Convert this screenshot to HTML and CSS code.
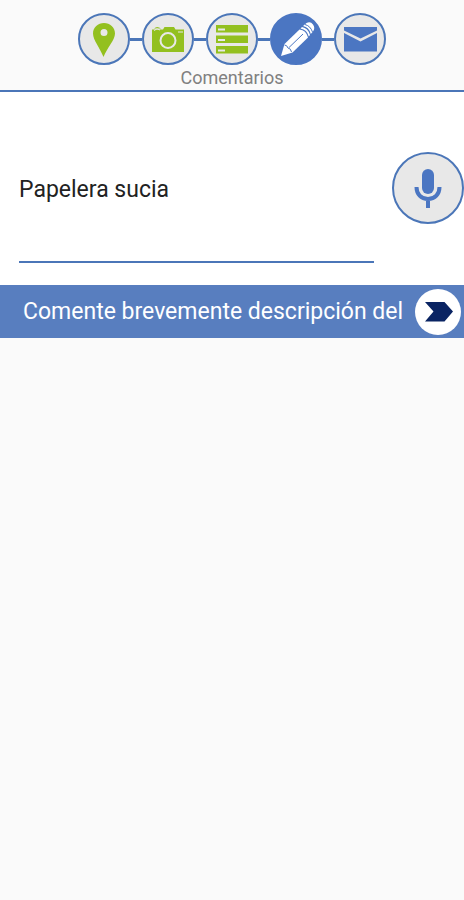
FILE: index.html
```html
<!DOCTYPE html>
<html lang="es">
  <head>
    <meta charset="UTF-8" />
    <meta name="viewport" content="width=device-width, initial-scale=1.0" />
    <title>Comentarios</title>
    <link rel="stylesheet" href="styles.css">
  </head>

  <body>
    <header class="header">
      <!-- Step navigation -->
      <nav class="steps">
        <a href="#ubicacion" class="step" aria-label="Ubicación">
          <svg viewBox="0 0 48 48">
            <path fill-rule="evenodd" d="M24 8C18 8 13 12.500 13 18.500C13 25 20 33 23.500 42C27 33 35 25 35 18.500C35 12.500 30 8 24 8ZM24 14A3.500 3.500 0 1 1 24 21A3.500 3.500 0 1 1 24 14Z" />
          </svg>
        </a>
        <span class="connector"></span>
        <a href="#foto" class="step" aria-label="Foto">
          <svg viewBox="0 0 48 48">
            <path d="M8 14.500H19L20.500 12H30L31.500 14.500H40V37H8Z" />
            <path d="M10 13.500Q13 10.500 17 13.500Z" />
            <path class="cutout thin" d="M10 15.500Q13 12.500 16 15M34 17H39" />
            <circle class="cutout" cx="24" cy="25.500" r="7.500" />
          </svg>
        </a>
        <span class="connector"></span>
        <a href="#tipo" class="step" aria-label="Tipo">
          <svg viewBox="0 0 48 48">
            <path d="M8 10H40V17.500H8ZM8 20.500H40V28H8ZM8 31H40V38.500H8Z" />
            <path class="cutout" d="M10 14.500H17M10 25H17M10 35.500H17" />
          </svg>
        </a>
        <span class="connector"></span>
        <a href="#comentarios" class="step active" aria-label="Comentarios" aria-current="step">
          <svg viewBox="0 0 48 48">
            <path d="M9 41L12.500 29L27.500 14.500Q34 15 36 22.500L20.500 37.500Z" />
            <path d="M28.500 13.500L30 12Q36 13 38 20L36.800 21.500Q35 14.500 28.500 13.500Z" />
            <path d="M31 11L34.500 8Q38.500 6 41 9.500Q43.500 13 41 16.500L38.800 19Q37 12 31 11Z" />
            <path class="mark" d="M12.500 30Q15 30 16 33Q19 33.500 19.500 37M17 32.500L31 19M33 9.500Q38.500 11 40.500 17" />
          </svg>
        </a>
        <span class="connector"></span>
        <a href="#enviar" class="step send" aria-label="Enviar">
          <svg viewBox="0 0 48 48">
            <path d="M8 12H41V15.500L24.500 23.500L8 15.500Z" />
            <path d="M8 18L24.500 26.500L41 18V36.500H8Z" />
          </svg>
        </a>
      </nav>
      <h1 class="title">Comentarios</h1>
    </header>

    <main>
      <form id="comment-form">
        <div class="comment">
          <input
            type="text"
            class="comment-input"
            id="comment"
            name="comment"
            value="Papelera sucia"
            aria-labelledby="comment-label"
          />
          <button type="button" class="mic" aria-label="Dictar comentario">
            <svg viewBox="0 0 68 68">
              <rect x="28" y="15" width="12" height="25" rx="6" />
              <path class="stand" d="M22.500 33C22.500 40 27 45 34 45S45.500 40 45.500 33M34 45V54" />
            </svg>
          </button>
        </div>

        <div class="prompt">
          <label id="comment-label" for="comment">Comente brevemente descripción del</label>
          <button type="submit" class="next" aria-label="Siguiente">
            <svg viewBox="0 0 46 46">
              <path d="M10 13H29.500L38 22.500L29.500 32.500H10L18.500 22.500Z" />
            </svg>
          </button>
        </div>
      </form>
    </main>
  </body>
</html>
```

FILE: styles.css
```css
/* Global Styles */
* {
  box-sizing: border-box;
}

body {
  margin: 0;
  background: #fafafa;
  font-family: Roboto, sans-serif;
  color: #222;
}

button {
  padding: 0;
  cursor: pointer;
}

svg {
  display: block;
  width: 100%;
  height: 100%;
}

/* Header */
.header {
  padding-top: 13px;
  border-bottom: 2px solid #4b76b8;
}

.steps {
  display: flex;
  justify-content: center;
  align-items: center;
}

.step {
  width: 52px;
  height: 52px;
  border: 2px solid #4b76b8;
  border-radius: 50%;
  background: #e8e8e8;
  fill: #93c01f;
}

.step.active {
  border-color: #4b76c2;
  background: #4b76c2;
  fill: #fff;
}

.step.send {
  fill: #4b76c2;
}

.connector {
  width: 12px;
  height: 3px;
  background: #4b76b8;
}

.cutout {
  fill: none;
  stroke: #e8e8e8;
  stroke-width: 2;
}

.cutout.thin {
  stroke-width: 1;
}

.mark {
  fill: none;
  stroke: #4b76c2;
  stroke-width: 1;
}

.title {
  margin: 0;
  color: #808080;
  font-size: 18px;
  font-weight: normal;
  line-height: 25px;
  text-align: center;
}

/* Comment field */
.comment {
  display: flex;
  align-items: flex-start;
  gap: 18px;
  padding: 60px 0 22px 19px;
  background: #fff;
}

.comment-input {
  flex: 1;
  min-width: 0;
  height: 111px;
  padding: 0 0 34px;
  border: none;
  border-bottom: 2px solid #4b76b8;
  background: none;
  color: #222;
  font-family: inherit;
  font-size: 23px;
  outline: none;
}

.mic {
  flex: none;
  width: 72px;
  height: 72px;
  border: 2px solid #4b76b8;
  border-radius: 50%;
  background: #e8e8e8;
  fill: #4b76c2;
}

.stand {
  fill: none;
  stroke: #4b76c2;
  stroke-width: 4;
}

/* Prompt bar */
.prompt {
  display: flex;
  justify-content: space-between;
  align-items: center;
  height: 53px;
  padding: 0 3px 0 23px;
  background: #587ebf;
  color: #fff;
  font-size: 23px;
  line-height: 30px;
  white-space: nowrap;
}

.next {
  flex: none;
  width: 46px;
  height: 46px;
  border: none;
  border-radius: 50%;
  background: #fff;
  fill: #0a2463;
}
```
